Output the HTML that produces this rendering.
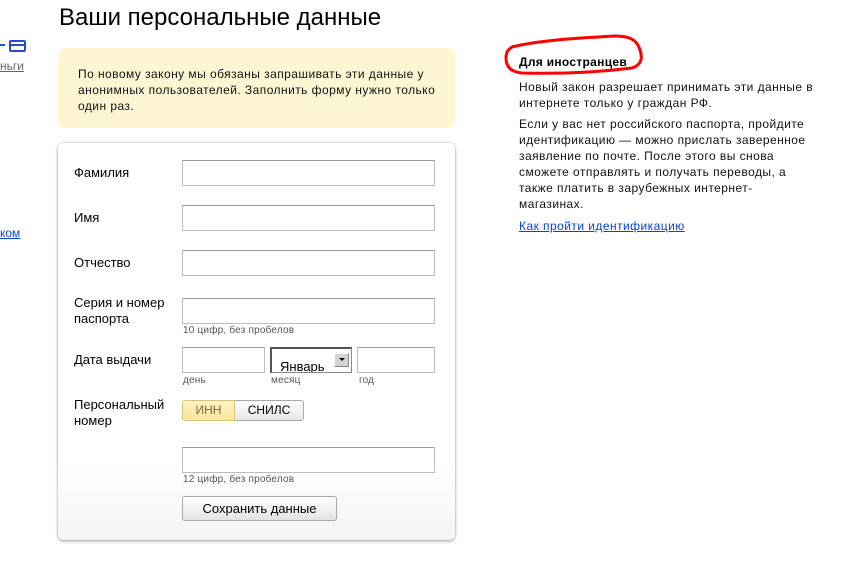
<!DOCTYPE html>
<html><head><meta charset="utf-8"><style>
*{margin:0;padding:0;box-sizing:border-box}
body{width:846px;height:580px;background:#fff;position:relative;overflow:hidden;font-family:"Liberation Sans","Noto Sans CJK SC",sans-serif;color:#000}
.a{position:absolute;white-space:nowrap}
.l{font-size:13px;line-height:16px}
.inp{position:absolute;border:1px solid #bdbdbd;border-top-color:#9a9a9a;background:#fff;height:26px}
.h{font-size:10px;color:#555;letter-spacing:.2px}
.t{font-size:12px;line-height:16px;letter-spacing:.45px}
</style></head><body>
<div class="a" style="left:59px;top:3px;font-size:24px;line-height:30px">Ваши персональные данные</div>
<div class="a" style="left:0;top:44px;width:5px;height:2px;background:#2255cc"></div>
<div class="a" style="left:9px;top:40px;width:17px;height:12px;border:2px solid #2a4ccc;border-radius:2px"><div style="height:2px;background:#2a4ccc;margin-top:2px"></div></div>
<div class="a" style="left:0;top:59px;font-size:12px;color:#666;text-decoration:underline">ньги</div>
<div class="a" style="left:0;top:226px;font-size:12px;color:#0645d6;text-decoration:underline">ком</div>

<div class="a" style="left:58px;top:48px;width:397px;height:80px;background:#fef6d3;border-radius:8px"></div>
<div class="a t" style="left:78px;top:66px;color:#111">По новому закону мы обязаны запрашивать эти данные у<br>анонимных пользователей. Заполнить форму нужно только<br>один раз.</div>

<div class="a" style="left:58px;top:143px;width:397px;height:397px;background:linear-gradient(#fff 80%,#f4f4f4);border-radius:5px;box-shadow:0 0 2px rgba(0,0,0,.35),0 2px 3px rgba(0,0,0,.2)"></div>

<div class="a l" style="left:74px;top:165px">Фамилия</div>
<div class="inp" style="left:182px;top:160px;width:253px"></div>
<div class="a l" style="left:74px;top:210px">Имя</div>
<div class="inp" style="left:182px;top:205px;width:253px"></div>
<div class="a l" style="left:74px;top:255px">Отчество</div>
<div class="inp" style="left:182px;top:250px;width:253px"></div>
<div class="a l" style="left:74px;top:295px">Серия и номер<br>паспорта</div>
<div class="inp" style="left:182px;top:298px;width:253px"></div>
<div class="a h" style="left:183px;top:325px">10 цифр, без пробелов</div>
<div class="a l" style="left:74px;top:352px">Дата выдачи</div>
<div class="inp" style="left:182px;top:347px;width:83px"></div>
<div class="a" style="left:270px;top:347px;width:82px;height:26px;border:1px solid #888;border-top:2px solid #555;border-left:2px solid #555;background:#fff;overflow:hidden">
<div class="a" style="left:8px;top:10px;font-size:13px">Январь</div>
<div class="a" style="left:62px;top:4px;width:15px;height:14px;background:#d6d3ce;border:1px solid #888;border-top-color:#fff;border-left-color:#fff"><div style="margin:4px auto 0;width:0;height:0;border-left:3px solid transparent;border-right:3px solid transparent;border-top:3px solid #000"></div></div>
</div>
<div class="inp" style="left:357px;top:347px;width:78px"></div>
<div class="a h" style="left:183px;top:375px">день</div>
<div class="a h" style="left:271px;top:375px">месяц</div>
<div class="a h" style="left:359px;top:375px">год</div>
<div class="a l" style="left:74px;top:397px">Персональный<br>номер</div>
<div class="a" style="left:182px;top:400px;width:53px;height:21px;background:linear-gradient(#fff3c2,#fbe59a);border:1px solid #d9c37a;border-radius:3px 0 0 3px;font-size:12px;color:#7a6a40;text-align:center;line-height:19px">ИНН</div>
<div class="a" style="left:235px;top:400px;width:69px;height:21px;background:linear-gradient(#fff,#e6e6e6);border:1px solid #aaa;border-left:none;border-radius:0 3px 3px 0;font-size:12px;text-align:center;line-height:19px">СНИЛС</div>
<div class="inp" style="left:182px;top:447px;width:253px"></div>
<div class="a h" style="left:183px;top:474px">12 цифр, без пробелов</div>
<div class="a" style="left:182px;top:496px;width:155px;height:25px;background:linear-gradient(#fff,#e2e2e2);border:1px solid #a8a8a8;border-radius:3px;font-size:13px;text-align:center;line-height:23px">Сохранить данные</div>

<div class="a t" style="left:519px;top:54px;font-weight:bold;letter-spacing:.3px">Для иностранцев</div>
<svg class="a" style="left:0;top:0;z-index:2" width="846" height="100"><path d="M512 47 C540 40 580 38 615 36 C630 36 637 40 640 50 C643 59 641 65 632 68 C600 72 560 74 522 73 C510 72 506 66 506 58 C506 52 508 49 514 46" fill="none" stroke="#f00" stroke-width="3" stroke-linejoin="round"/></svg>
<div class="a t" style="left:519px;top:79px;color:#111">Новый закон разрешает принимать эти данные в<br>интернете только у граждан РФ.</div>
<div class="a t" style="left:519px;top:116px;color:#111">Если у вас нет российского паспорта, пройдите<br>идентификацию — можно прислать заверенное<br>заявление по почте. После этого вы снова<br>сможете отправлять и получать переводы, а<br>также платить в зарубежных интернет-<br>магазинах.</div>
<div class="a t" style="left:519px;top:218px;color:#0645d6;text-decoration:underline">Как пройти идентификацию</div>
</body></html>
